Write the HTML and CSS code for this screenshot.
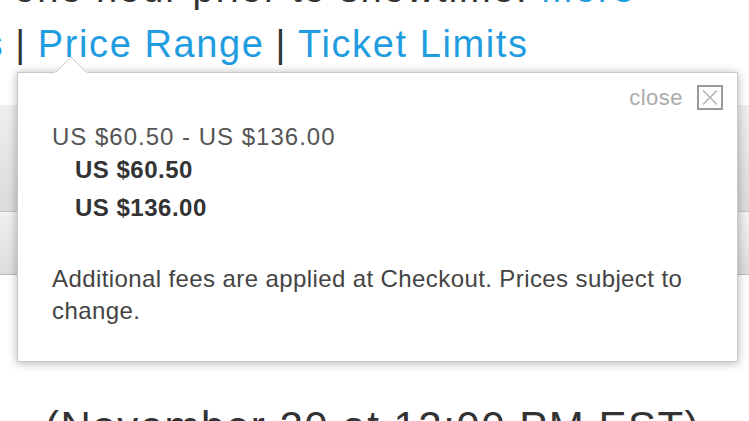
FILE: index.html
```html
<!DOCTYPE html>
<html lang="en">
<head>
  <meta charset="UTF-8" />
  <meta name="viewport" content="width=device-width, initial-scale=1.0"/>
  <title>Price Range</title>
  <link rel="stylesheet" href="styles.css">
</head>
<body>
  <div class="page">
    <p class="intro">one hour prior to showtime. <a href="#">More</a></p>

    <p class="tabs">
      <a href="#">Details</a><span class="sep">|</span><a href="#">Price Range</a><span class="sep">|</span><a href="#">Ticket Limits</a>
    </p>

    <div class="rows">
      <div class="row row-tall"></div>
      <div class="row row-short"></div>
    </div>

    <p class="onsale">(November 20 at 12:00 PM EST)</p>

    <div class="popover">
      <svg class="popover-arrow" width="32" height="16" viewBox="0 0 32 16">
        <polygon points="0,16 16,0 32,16" fill="#fff" stroke="#c9c9c9" stroke-width="1"/>
        <rect x="0" y="15" width="32" height="2" fill="#fff"/>
      </svg>

      <div class="popover-head">
        <span class="close-label">close</span>
        <svg class="close-box" width="26" height="25" viewBox="0 0 26 25">
          <rect x="1" y="1" width="24" height="23" fill="#fff" stroke="#9a9a9a" stroke-width="2"/>
          <path d="M6 5.5 L20 19.5 M20 5.5 L6 19.5" stroke="#b5b5b5" stroke-width="1.6" fill="none"/>
        </svg>
      </div>

      <p class="range">US $60.50 - US $136.00</p>
      <p class="price">US $60.50</p>
      <p class="price">US $136.00</p>

      <p class="note">Additional fees are applied at Checkout. Prices subject to change.</p>
    </div>
  </div>
</body>
</html>
```

FILE: styles.css
```css
:root {
  --link: #1f9de0;
  --text: #333;
  --muted: #555;
}

* {
  margin: 0;
  padding: 0;
  box-sizing: border-box;
}

html, body {
  height: 100%;
  overflow: hidden;
}

body {
  background: #fff;
  color: var(--text);
  font-family: "Liberation Sans", Arial, sans-serif;
}

a {
  color: var(--link);
  text-decoration: none;
}

.page {
  position: relative;
  display: flow-root;
  height: 100%;
  overflow: hidden;
}

.intro {
  margin-top: -30px;
  padding-left: 14px;
  font-size: 38px;
  line-height: 38px;
  letter-spacing: 2px;
  white-space: nowrap;
}

.tabs {
  margin-top: 14px;
  margin-left: -123px;
  font-size: 38px;
  line-height: 44px;
  letter-spacing: 1.6px;
  white-space: nowrap;
}

.tabs .sep {
  color: #333;
  margin: 0 11px;
}

.rows {
  margin-top: 39px;
}

.row {
  background: linear-gradient(#efefef, #dadada);
  border-bottom: 1px solid #c4c4c4;
}

.row-tall {
  height: 107px;
}

.row-short {
  height: 63px;
  background: linear-gradient(#f1f1f1, #dcdcdc);
  border-bottom-color: #b9b9b9;
}

.onsale {
  margin-top: 128px;
  padding-left: 45px;
  font-size: 42px;
  line-height: 48px;
  letter-spacing: 1.5px;
  white-space: nowrap;
}

/* price range popover, sits over the tabs content */
.popover {
  position: absolute;
  left: 17px;
  top: 72px;
  width: 721px;
  height: 290px;
  background: #fff;
  border: 1px solid #c9c9c9;
  box-shadow: 0 1px 9px rgba(0, 0, 0, 0.3);
  padding: 12px 14px 0 34px;
}

.popover-arrow {
  position: absolute;
  left: 37px;
  top: -16px;
}

.popover-head {
  display: flex;
  justify-content: flex-end;
  align-items: flex-start;
  gap: 14px;
  height: 25px;
}

.close-label {
  color: #ababab;
  font-size: 22px;
  line-height: 25px;
  letter-spacing: 0.5px;
}

.close-box {
  display: block;
}

.range {
  margin-top: 13px;
  color: var(--muted);
  font-size: 24px;
  line-height: 28px;
  letter-spacing: 1px;
}

.price {
  padding-left: 23px;
  color: var(--text);
  font-size: 24px;
  font-weight: bold;
  line-height: 38px;
  letter-spacing: 0.5px;
}

.note {
  margin-top: 36px;
  padding-right: 10px;
  color: #444;
  font-size: 24px;
  line-height: 32px;
  letter-spacing: 0.4px;
}
```
